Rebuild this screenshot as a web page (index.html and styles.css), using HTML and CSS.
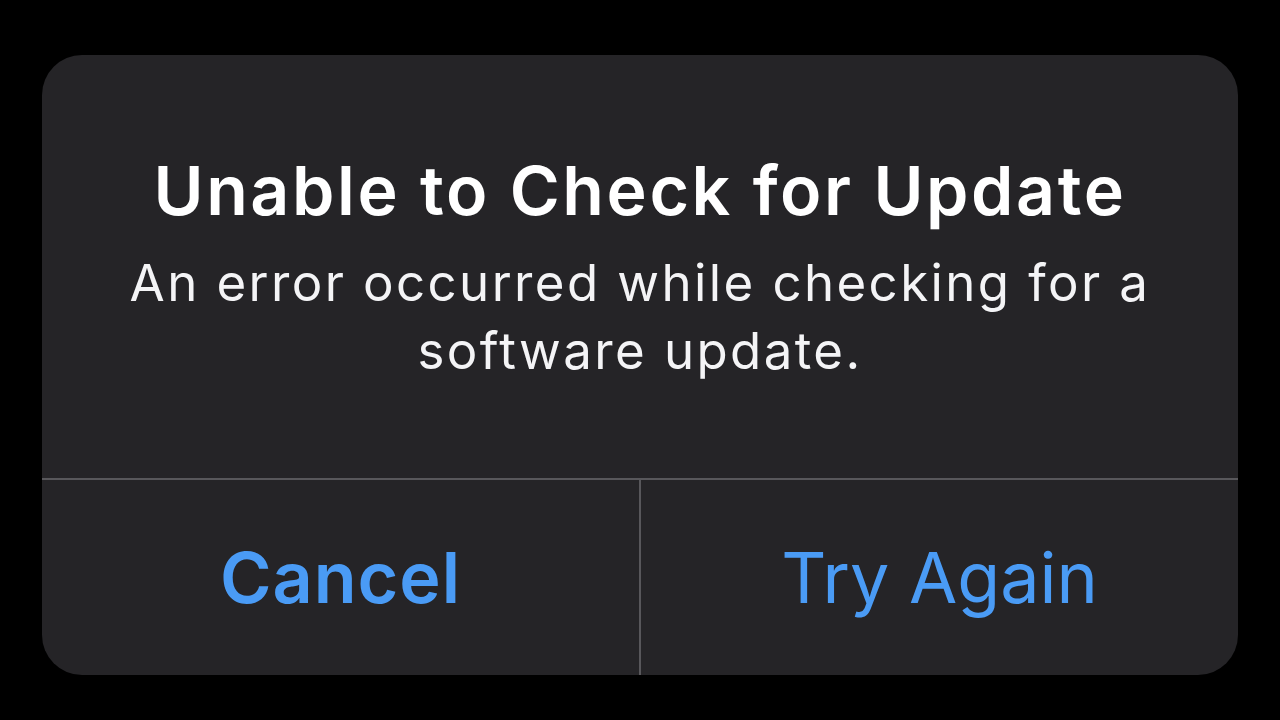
FILE: index.html
```html
<!DOCTYPE html>
<html>
  <head>
    <meta charset="UTF-8" />
    <title>Unable to Check for Update</title>
    <link rel="stylesheet" href="styles.css">
  </head>
  <body>
    <div class="alert">
      <div class="alert-body">
        <h1 class="alert-title">Unable to Check for Update</h1>
        <p class="alert-message">An error occurred while checking for a<br>software update.</p>
      </div>
      <div class="alert-actions">
        <button class="alert-btn bold">Cancel</button>
        <button class="alert-btn">Try Again</button>
      </div>
    </div>
  </body>
</html>
```

FILE: styles.css
```css
* {
  margin: 0;
  padding: 0;
  box-sizing: border-box;
}

body {
  width: 1280px;
  height: 720px;
  background-color: #000;
  font-family: Inter, "Noto Sans", sans-serif;
  color: #fff;
  padding-top: 55px;
  overflow: hidden;
}

.alert {
  width: 1196px;
  height: 620px;
  margin-left: 42px;
  background-color: #252427;
  border-radius: 40px;
  display: flex;
  flex-direction: column;
  overflow: hidden;
}

.alert-body {
  height: 425px;
  padding-top: 95px;
  text-align: center;
  border-bottom: 2px solid #58575b;
}

.alert-title {
  font-size: 68px;
  line-height: 80px;
  font-weight: 600;
  letter-spacing: 2.6px;
}

.alert-message {
  margin-top: 19px;
  font-size: 51px;
  line-height: 68px;
  font-weight: 400;
  letter-spacing: 2.4px;
  color: #f4f4f6;
}

.alert-actions {
  flex: 1;
  display: flex;
}

.alert-btn {
  flex: 1;
  background: none;
  border: none;
  color: #4a9bf5;
  font-family: inherit;
  font-size: 70px;
  font-weight: 400;
  cursor: pointer;
}

.alert-btn.bold {
  font-weight: 600;
  letter-spacing: 1px;
}

.alert-btn + .alert-btn {
  border-left: 2px solid #58575b;
}
```
